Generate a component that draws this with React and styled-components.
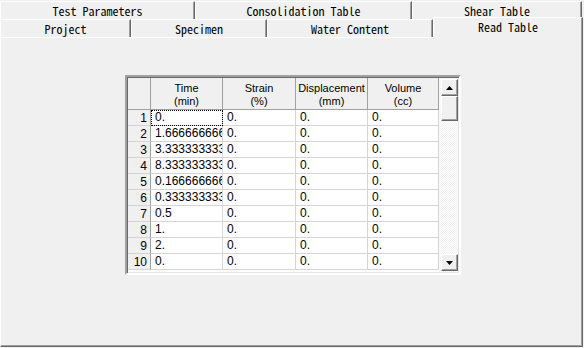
import React from "react";
import styled, { createGlobalStyle } from "styled-components";

const Global = createGlobalStyle`
  html, body { margin: 0; padding: 0; background: #f0f0f0; }
  body { width: 584px; height: 348px; overflow: hidden; }
`;

const Window = styled.div`
  width: 584px;
  height: 348px;
  box-sizing: border-box;
  padding-top: 1px;
  background: #f0f0f0;
  display: flex;
  flex-direction: column;
`;

const TabRow = styled.div`
  display: flex;
  height: 18px;
  flex: none;
`;

const Tab = styled.div`
  position: relative;
  width: ${(p) => p.$w}px;
  height: ${(p) => (p.$active ? 21 : 18)}px;
  margin-top: ${(p) => (p.$active ? -2 : 0)}px;
  z-index: ${(p) => (p.$active ? 2 : 0)};
  flex: none;
  box-sizing: border-box;
  background: #f0f0f0;
  border-top: 1px solid #fff;
  border-left: 1px solid #fff;
  border-right: 1px solid #696969;
  box-shadow: inset -1px 0 #a0a0a0;
  display: flex;
  justify-content: center;
  align-items: ${(p) => (p.$active ? "flex-start" : "center")};
  padding-top: ${(p) => (p.$active ? 2 : 0)}px;
  font-family: "Noto Sans Mono CJK SC", "Liberation Mono", monospace;
  font-size: 12px;
  line-height: 14px;
  color: #000;
  white-space: nowrap;
`;

const Panel = styled.div`
  width: 583px;
  height: 310px;
  flex: none;
  box-sizing: border-box;
  border-top: 1px solid #fff;
  border-left: 1px solid #fff;
  border-right: 1px solid #696969;
  border-bottom: 1px solid #696969;
  box-shadow: inset -1px -1px #a0a0a0;
  display: flex;
  flex-direction: column;
  align-items: center;
  padding-top: 37px;
  padding-left: 4px;
  padding-right: 1px;
`;

const GridFrame = styled.div`
  width: 336px;
  height: 200px;
  box-sizing: border-box;
  border: 2px solid;
  border-color: #a0a0a0 #fff #fff #a0a0a0;
  padding: 1px;
  box-shadow: inset 1px 1px #696969, inset -1px -1px #e3e3e3;
  display: flex;
`;

const Table = styled.div`
  display: grid;
  grid-template-columns: 23px 72px 73px 72px 71px;
  grid-template-rows: 32px repeat(10, 16px);
  background: #fff;
`;

const HeadCell = styled.div`
  box-sizing: border-box;
  background: #f0f0f0;
  border-right: 1px solid #a0a0a0;
  border-bottom: 1px solid #a0a0a0;
  padding-top: 2px;
  display: flex;
  flex-direction: column;
  align-items: center;
  justify-content: center;
  font-family: "Liberation Sans", Arial, sans-serif;
  font-size: 11px;
  line-height: 13px;
  color: #000;
  white-space: nowrap;
`;

const RowHead = styled.div`
  box-sizing: border-box;
  background: #f0f0f0;
  border-right: 1px solid #a0a0a0;
  border-bottom: 1px solid #d4d4d4;
  text-align: right;
  padding-right: 3px;
  font-family: "Liberation Sans", Arial, sans-serif;
  font-size: 12px;
  line-height: 16px;
  color: #000;
`;

const Cell = styled.div`
  box-sizing: border-box;
  border-right: 1px solid #d4d4d4;
  border-bottom: 1px solid #d4d4d4;
  padding-left: 4px;
  overflow: hidden;
  white-space: nowrap;
  text-overflow: clip;
  font-family: "Liberation Sans", Arial, sans-serif;
  font-size: 12px;
  line-height: 15px;
  color: #000;
  ${(p) => p.$focus && `outline: 1px dotted #000; outline-offset: -1px;`}
`;

const ScrollBar = styled.div`
  width: 19px;
  box-sizing: border-box;
  padding: 1px 0 1px 1px;
  display: flex;
  flex-direction: column;
  align-items: center;
  background: repeating-conic-gradient(#f0f0f0 0 25%, #fff 0 50%) 0 0 / 2px 2px;
`;

const Raised = styled.div`
  width: 17px;
  height: ${(p) => p.$h}px;
  flex: none;
  box-sizing: border-box;
  background: #f0f0f0;
  border-top: 1px solid #fff;
  border-left: 1px solid #fff;
  border-right: 1px solid #696969;
  border-bottom: 1px solid #696969;
  box-shadow: inset -1px -1px #a0a0a0;
  display: flex;
  align-items: center;
  justify-content: center;
`;

const Spacer = styled.div`
  flex: 1;
`;

const Arrow = ({ down }) => (
  <svg width="7" height="4" viewBox="0 0 7 4">
    {down ? (
      <polygon points="0,0 7,0 3.5,4" fill="#000" />
    ) : (
      <polygon points="0,4 7,4 3.5,0" fill="#000" />
    )}
  </svg>
);

const times = [
  "0.",
  "1.6666666666666667",
  "3.3333333333333335",
  "8.3333333333333339",
  "0.16666666666666666",
  "0.33333333333333331",
  "0.5",
  "1.",
  "2.",
  "0.",
];

const headers = [
  ["Time", "(min)"],
  ["Strain", "(%)"],
  ["Displacement", "(mm)"],
  ["Volume", "(cc)"],
];

export default function App() {
  return (
    <Window>
      <Global />
      <TabRow>
        <Tab $w={195}>Test Parameters</Tab>
        <Tab $w={217}>Consolidation Table</Tab>
        <Tab $w={170}>Shear Table</Tab>
      </TabRow>
      <TabRow>
        <Tab $w={131}>Project</Tab>
        <Tab $w={136}>Specimen</Tab>
        <Tab $w={166}>Water Content</Tab>
        <Tab $w={150} $active>
          Read Table
        </Tab>
      </TabRow>
      <Panel>
        <GridFrame>
          <Table>
            <HeadCell />
            {headers.map(([a, b]) => (
              <HeadCell key={a}>
                <span>{a}</span>
                <span>{b}</span>
              </HeadCell>
            ))}
            {times.map((t, i) => (
              <React.Fragment key={i}>
                <RowHead>{i + 1}</RowHead>
                <Cell $focus={i === 0}>{t}</Cell>
                <Cell>0.</Cell>
                <Cell>0.</Cell>
                <Cell>0.</Cell>
              </React.Fragment>
            ))}
          </Table>
          <ScrollBar>
            <Raised $h={17}>
              <Arrow />
            </Raised>
            <Raised $h={25} />
            <Spacer />
            <Raised $h={17}>
              <Arrow down />
            </Raised>
          </ScrollBar>
        </GridFrame>
      </Panel>
    </Window>
  );
}
